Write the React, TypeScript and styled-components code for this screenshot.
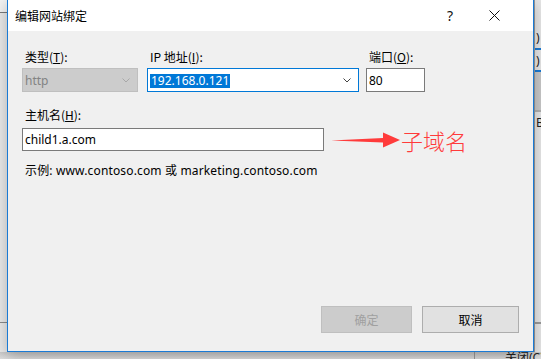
import React from "react";
import styled, { createGlobalStyle } from "styled-components";

const GlobalStyle = createGlobalStyle`
  html, body {
    margin: 0;
    padding: 0;
    background: #e4e4e4;
    overflow: hidden;
  }
  * { box-sizing: border-box; }
`;

const UI_FONT = `"Noto Sans", "Noto Sans CJK SC", sans-serif`;

// Desktop + whatever window lies behind the dialog
const Desktop = styled.div`
  position: relative;
  width: 541px;
  height: 359px;
  overflow: hidden;
  background: linear-gradient(#f3f3f3 0 12px, #7a7a7a 12px 13px, #e9e9e9 13px);
  font-family: ${UI_FONT};
`;

const BackRight = styled.div`
  position: absolute;
  left: 534px;
  top: 0;
  width: 7px;
  height: 359px;
  background: #e6e6e6;
  border-left: 1px solid #9a9a9a;
  display: flex;
  flex-direction: column;
  font-size: 12px;
  color: #222;
  overflow: hidden;
`;

const BackSlice = styled.div<{ $h: number; $bg?: string; $line?: string }>`
  height: ${(p) => p.$h}px;
  flex-shrink: 0;
  background: ${(p) => p.$bg ?? "transparent"};
  border-bottom: ${(p) => (p.$line ? `2px solid ${p.$line}` : "none")};
  line-height: ${(p) => p.$h}px;
  padding-left: 1px;
  white-space: nowrap;
  overflow: hidden;
`;

const BackLeftLine = styled.div`
  position: absolute;
  left: 0;
  top: 322px;
  width: 7px;
  height: 1px;
  background: #8a8a8a;
`;

const BackBottom = styled.div`
  position: absolute;
  left: 0;
  top: 352px;
  width: 541px;
  height: 7px;
  background: linear-gradient(#c9c9c9, #dedede);
  display: flex;
  justify-content: flex-end;
`;

const BackBottomCell = styled.div`
  width: 67px;
  border-left: 1px solid #9a9a9a;
  font-size: 12px;
  line-height: 12px;
  color: #222;
  padding: 0 0 0 30px;
  white-space: nowrap;
  overflow: hidden;
  margin-top: -4px;
  padding-top: 4px;
`;

// Dialog
const Dialog = styled.div`
  position: absolute;
  left: 7px;
  top: -1px;
  width: 527px;
  height: 353px;
  border: 1px solid #1a7ad4;
  background: #f0f0f0;
  display: flex;
  flex-direction: column;
  box-shadow: 0 4px 14px rgba(0, 0, 0, 0.25);
`;

const TitleBar = styled.div`
  height: 31px;
  background: #fff;
  display: flex;
  align-items: center;
  padding: 0 16px 0 7px;
  flex-shrink: 0;
`;

const Title = styled.div`
  flex: 1;
  font-family: "Noto Sans CJK SC", sans-serif;
  font-size: 12px;
  color: #000;
  padding-bottom: 1px;
`;

const TitleButton = styled.div<{ $w: number }>`
  width: ${(p) => p.$w}px;
  height: 31px;
  display: flex;
  align-items: center;
  justify-content: center;
  font-size: 14px;
  color: #111;
`;

const Body = styled.div`
  flex: 1;
  display: flex;
  flex-direction: column;
  padding: 18px 14px 18px 14px;
`;

const TopGrid = styled.div`
  display: grid;
  grid-template-columns: 125px 219px 59px;
  row-gap: 3px;
`;

const Label = styled.div`
  font-family: "Noto Sans CJK SC", sans-serif;
  font-size: 12px;
  line-height: 16px;
  height: 16px;
  padding-left: 3px;
  color: #000;
  white-space: nowrap;
`;

const Accel = styled.span`
  text-decoration: underline;
  text-underline-offset: 1px;
`;

const Field = styled.div<{ $w: number; $h?: number; $state?: "disabled" | "focus" | "normal" }>`
  width: ${(p) => p.$w}px;
  height: ${(p) => p.$h ?? 24}px;
  border: 1px solid
    ${(p) =>
      p.$state === "disabled" ? "#bfbfbf" : p.$state === "focus" ? "#0078d7" : "#7a7a7a"};
  background: ${(p) => (p.$state === "disabled" ? "#cccccc" : "#ffffff")};
  color: ${(p) => (p.$state === "disabled" ? "#838383" : "#000")};
  display: flex;
  align-items: center;
  padding: 0 3px 0 2px;
  font-family: ${UI_FONT};
  font-size: 12px;
`;

const FieldText = styled.div`
  flex: 1;
  white-space: nowrap;
  overflow: hidden;
`;

const Selected = styled.span`
  background: #0078d7;
  color: #fff;
  line-height: 14px;
  display: inline-block;
  padding: 0 1px;
`;

const Chevron = ({ color }: { color: string }) => (
  <svg width="8" height="5" viewBox="0 0 8 5" style={{ marginRight: 4 }}>
    <path d="M0.5 0.5 L4 4 L7.5 0.5" fill="none" stroke={color} strokeWidth="1" />
  </svg>
);

const HostSection = styled.div`
  margin-top: 15px;
  display: flex;
  flex-direction: column;
  gap: 4px;
`;

const HostRow = styled.div`
  display: flex;
  align-items: center;
`;

const Annotation = styled.div`
  display: flex;
  align-items: center;
  margin-left: 7px;
  color: #ff3b3b;
  font-family: "Noto Sans CJK SC", serif;
  font-weight: 300;
  font-size: 22px;
  line-height: 24px;
  margin-top: 1px;
`;

const Example = styled.div`
  margin-top: 11px;
  padding-left: 3px;
  font-family: ${UI_FONT};
  font-size: 12px;
  letter-spacing: 0.15px;
  line-height: 16px;
  color: #000;
`;

const Footer = styled.div`
  margin-top: auto;
  display: flex;
  justify-content: flex-end;
  gap: 10px;
`;

const Button = styled.div<{ $w: number; $disabled?: boolean }>`
  width: ${(p) => p.$w}px;
  height: 27px;
  border: 1px solid ${(p) => (p.$disabled ? "#bfbfbf" : "#adadad")};
  background: ${(p) => (p.$disabled ? "#cccccc" : "#e1e1e1")};
  color: ${(p) => (p.$disabled ? "#a0a0a0" : "#000")};
  display: flex;
  align-items: center;
  justify-content: center;
  font-family: "Noto Sans CJK SC", sans-serif;
  font-size: 12px;
`;

export default function App() {
  return (
    <>
      <GlobalStyle />
      <Desktop>
        <BackLeftLine />
        <BackRight>
          <BackSlice $h={26} />
          <BackSlice $h={24} $line="#1a7ad4">)</BackSlice>
          <BackSlice $h={22} $line="#1a7ad4">)</BackSlice>
          <BackSlice $h={40} $bg="#c8c8c8" $line="#b0b0b0" />
          <BackSlice $h={22}>B</BackSlice>
          <BackSlice $h={190} $bg="#e6e6e6" $line="#9a9a9a" />
        </BackRight>
        <BackBottom>
          <BackBottomCell>关闭(C)</BackBottomCell>
        </BackBottom>

        <Dialog>
          <TitleBar>
            <Title>编辑网站绑定</Title>
            <TitleButton $w={42}>?</TitleButton>
            <TitleButton $w={46}>
              <svg width="11" height="11" viewBox="0 0 11 11">
                <path d="M0.5 0.5 L10.5 10.5 M10.5 0.5 L0.5 10.5" stroke="#111" strokeWidth="1" />
              </svg>
            </TitleButton>
          </TitleBar>

          <Body>
            <TopGrid>
              <Label>
                类型(<Accel>T</Accel>):
              </Label>
              <Label>
                IP 地址(<Accel>I</Accel>):
              </Label>
              <Label>
                端口(<Accel>O</Accel>):
              </Label>

              <Field $w={116} $state="disabled">
                <FieldText>http</FieldText>
                <Chevron color="#a8a8a8" />
              </Field>
              <Field $w={212} $state="focus">
                <FieldText>
                  <Selected>192.168.0.121</Selected>
                </FieldText>
                <Chevron color="#444" />
              </Field>
              <Field $w={59}>
                <FieldText>80</FieldText>
              </Field>
            </TopGrid>

            <HostSection>
              <Label>
                主机名(<Accel>H</Accel>):
              </Label>
              <HostRow>
                <Field $w={302} $h={23}>
                  <FieldText>child1.a.com</FieldText>
                </Field>
                <Annotation>
                  <svg width="70" height="16" viewBox="0 0 70 16">
                    <polygon
                      points="0,8.5 52,6 52,0.5 69,8 52,15.5 52,10.5"
                      fill="#ff3b3b"
                    />
                  </svg>
                  <span>子域名</span>
                </Annotation>
              </HostRow>
            </HostSection>

            <Example>示例: www.contoso.com 或 marketing.contoso.com</Example>

            <Footer>
              <Button $w={91} $disabled>
                确定
              </Button>
              <Button $w={97}>取消</Button>
            </Footer>
          </Body>
        </Dialog>
      </Desktop>
    </>
  );
}
